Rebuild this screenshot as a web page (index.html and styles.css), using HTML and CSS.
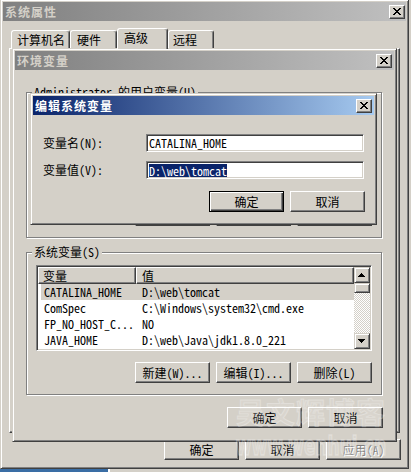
FILE: index.html
```html
<!DOCTYPE html>
<html lang="zh-CN">
<head>
<meta charset="utf-8">
<title>编辑系统变量</title>
<link rel="stylesheet" href="styles.css">
</head>
<body>
<div class="desktop">
  <div class="win win-main">
    <div class="titlebar inactive">
      <span class="title-text">系统属性</span>
      <span class="close-btn"><svg width="8" height="7" viewBox="0 0 8 7" shape-rendering="crispEdges"><path d="M0 0h2v1H0zM6 0h2v1H6zM1 1h2v1H1zM5 1h2v1H5zM2 2h4v1H2zM3 3h2v1H3zM2 4h4v1H2zM1 5h2v1H1zM5 5h2v1H5zM0 6h2v1H0zM6 6h2v1H6z" fill="#000"/></svg></span>
    </div>
    <div class="tabs">
      <div class="tab tab-1">计算机名</div>
      <div class="tab tab-2">硬件</div>
      <div class="tab tab-3 selected">高级</div>
      <div class="tab tab-4">远程</div>
    </div>
    <div class="tabpage"></div>
    <div class="btn-row main-btns">
      <button class="btn">确定</button>
      <button class="btn">取消</button>
      <button class="btn disabled">应用(A)</button>
    </div>
  </div>

  <div class="win win-env">
    <div class="titlebar inactive">
      <span class="title-text">环境变量</span>
      <span class="close-btn"><svg width="8" height="7" viewBox="0 0 8 7" shape-rendering="crispEdges"><path d="M0 0h2v1H0zM6 0h2v1H6zM1 1h2v1H1zM5 1h2v1H5zM2 2h4v1H2zM3 3h2v1H3zM2 4h4v1H2zM1 5h2v1H1zM5 5h2v1H5zM0 6h2v1H0zM6 6h2v1H6z" fill="#000"/></svg></span>
    </div>
    <div class="env-body">
      <div class="group group-user">
        <div class="legend">Administrator 的用户变量(U)</div>
        <div class="listbox"></div>
        <div class="btn-row group-btns">
          <button class="btn">新建(N)...</button>
          <button class="btn">编辑(E)...</button>
          <button class="btn">删除(D)</button>
        </div>
      </div>
      <div class="group group-sys">
        <div class="legend">系统变量(S)</div>
        <div class="listbox">
          <div class="list-main">
            <div class="list-header">
              <div class="hcell hc1">变量</div>
              <div class="hcell hc2">值</div>
            </div>
            <div class="row selected"><span class="c1">CATALINA_HOME</span><span class="c2">D:\web\tomcat</span></div>
            <div class="row"><span class="c1">ComSpec</span><span class="c2">C:\Windows\system32\cmd.exe</span></div>
            <div class="row"><span class="c1">FP_NO_HOST_C...</span><span class="c2">NO</span></div>
            <div class="row"><span class="c1">JAVA_HOME</span><span class="c2">D:\web\Java\jdk1.8.0_221</span></div>
          </div>
          <div class="vscroll">
            <div class="sb-btn"><svg width="7" height="4" viewBox="0 0 7 4" shape-rendering="crispEdges"><path d="M3 0h1v1h1v1h1v1h1v1H0V3h1V2h1V1h1z" fill="#000"/></svg></div>
            <div class="sb-thumb"></div>
            <div class="sb-track"></div>
            <div class="sb-btn"><svg width="7" height="4" viewBox="0 0 7 4" shape-rendering="crispEdges"><path d="M0 0h7v1H6v1H5v1H4v1H3V3H2V2H1V1H0z" fill="#000"/></svg></div>
          </div>
        </div>
        <div class="btn-row group-btns sys-btns">
          <button class="btn">新建(W)...</button>
          <button class="btn">编辑(I)...</button>
          <button class="btn">删除(L)</button>
        </div>
      </div>
      <div class="btn-row env-btns">
        <button class="btn">确定</button>
        <button class="btn">取消</button>
      </div>
    </div>
  </div>

  <div class="win win-edit">
    <div class="titlebar active">
      <span class="title-text">编辑系统变量</span>
      <span class="close-btn"><svg width="8" height="7" viewBox="0 0 8 7" shape-rendering="crispEdges"><path d="M0 0h2v1H0zM6 0h2v1H6zM1 1h2v1H1zM5 1h2v1H5zM2 2h4v1H2zM3 3h2v1H3zM2 4h4v1H2zM1 5h2v1H1zM5 5h2v1H5zM0 6h2v1H0zM6 6h2v1H6z" fill="#000"/></svg></span>
    </div>
    <div class="edit-body">
      <div class="field">
        <span class="field-label">变量名(N):</span>
        <div class="textbox">CATALINA_HOME</div>
      </div>
      <div class="field field-2">
        <span class="field-label">变量值(V):</span>
        <div class="textbox"><span class="sel">D:\web\tomcat</span></div>
      </div>
      <div class="btn-row edit-btns">
        <button class="btn default">确定</button>
        <button class="btn">取消</button>
      </div>
    </div>
  </div>

  <div class="watermark">
    <div class="wm-cn">吴文辉博客</div>
    <div class="wm-en">www.wenhui.cn</div>
  </div>
</div>
<div class="taskstrip"><span class="ts-blue"></span><span class="ts-white"></span></div>
</body>
</html>
```
FILE: styles.css
```css
* { box-sizing: border-box; }
html, body { margin: 0; padding: 0; }
body {
  width: 411px;
  height: 472px;
  overflow: hidden;
  background: #d4d0c8;
  color: #000;
  font-family: "Noto Sans Mono CJK SC", "Noto Sans CJK SC", monospace;
  font-size: 12px;
  line-height: 12px;
}
.desktop { position: relative; height: 469px; overflow: hidden; }

.win {
  position: absolute;
  display: flex;
  flex-direction: column;
  background: #d4d0c8;
  border: 1px solid;
  border-color: #d4d0c8 #404040 #404040 #d4d0c8;
  box-shadow: inset 1px 1px #fff, inset -1px -1px #808080;
  padding: 2px;
}
.win-main { left: 0; top: -1px; width: 409px; height: 470px; }
.win-env { left: 12px; top: 48px; width: 385px; height: 394px; }
.win-edit { left: 30px; top: 93px; width: 347px; height: 132px; }

.titlebar {
  flex: none;
  height: 19px;
  display: flex;
  align-items: center;
  justify-content: space-between;
  padding-left: 2px;
  font-weight: 700;
  letter-spacing: 1px;
}
.titlebar.inactive { background: linear-gradient(to right, #808080, #c0c0c0); color: #d4d0c8; }
.titlebar.active { background: linear-gradient(to right, #0a246a, #a6caf0); color: #fff; }
.close-btn {
  width: 16px;
  height: 14px;
  margin-right: 2px;
  background: #d4d0c8;
  border: 1px solid;
  border-color: #fff #404040 #404040 #fff;
  box-shadow: inset -1px -1px #808080;
  padding: 2px 0 0 3px;
  line-height: 0;
}
.win-main .close-btn { margin-right: 1px; }
.close-btn svg { display: block; }

/* tabs */
.tabs {
  position: relative;
  z-index: 1;
  display: flex;
  align-items: flex-end;
  height: 20px;
  margin: 7px 0 0 8px;
}
.tab {
  height: 18px;
  background: #d4d0c8;
  border: 1px solid;
  border-bottom: 0;
  border-color: #fff #404040 transparent #fff;
  border-radius: 3px 3px 0 0;
  box-shadow: inset -1px 0 #808080;
  padding: 3px 0 0 5px;
  line-height: 12px;
}
.tab-1 { width: 59px; }
.tab-2 { width: 47px; padding-left: 6px; }
.tab-3 { width: 51px; padding-left: 6px; }
.tab-4 { width: 46px; padding-left: 4px; }
.tab.selected { height: 21px; margin-bottom: -1px; padding-top: 3px; }
.tabpage {
  margin-left: 6px;
  width: 391px;
  height: 385px;
  border: 1px solid;
  border-color: #fff #404040 #404040 #fff;
  box-shadow: inset -1px -1px #808080;
}

/* buttons */
.btn-row { display: flex; justify-content: flex-end; gap: 6px; }
.btn {
  width: 75px;
  height: 21px;
  flex: none;
  margin: 0;
  padding: 0;
  font: inherit;
  color: #000;
  background: #d4d0c8;
  border: 1px solid;
  border-color: #fff #404040 #404040 #fff;
  box-shadow: inset -1px -1px #808080;
  display: flex;
  align-items: center;
  justify-content: center;
}
.btn.default {
  border-color: #000;
  box-shadow: inset 1px 1px #fff, inset -1px -1px #404040, inset -2px -2px #808080;
}
.btn.disabled { color: #808080; text-shadow: 1px 1px #fff; }
.main-btns { margin-top: 6px; padding-right: 5px; }

/* env window */
.env-body { display: flex; flex-direction: column; }
.group {
  margin: 0 12px 0 11px;
  border: 1px solid #808080;
  box-shadow: inset 1px 1px #fff, 1px 1px #fff;
  padding: 0 9px 11px 9px;
}
.group-user { margin-top: 22px; }
.group-sys { margin-top: 14px; }
.legend {
  width: max-content;
  margin: -7px 0 0 -4px;
  padding: 0 2px;
  height: 12px;
  line-height: 12px;
  background: #d4d0c8;
}
.group-user .group-btns { margin-top: 14px; }
.sys-btns { margin-top: 11px; }
.env-btns { margin-top: 12px; padding-right: 11px; }

.listbox {
  display: flex;
  height: 86px;
  margin-top: 7px;
  border: 1px solid;
  border-color: #808080 #fff #fff #808080;
  box-shadow: inset 1px 1px #404040, inset -1px -1px #d4d0c8;
  padding: 1px;
  background: #fff;
}
.list-main { flex: 1; display: flex; flex-direction: column; background: #fff; }
.list-header { display: flex; height: 17px; flex: none; }
.hcell {
  height: 17px;
  background: #d4d0c8;
  border: 1px solid;
  border-color: #fff #404040 #404040 #fff;
  box-shadow: inset -1px -1px #808080;
  display: flex;
  align-items: center;
  padding-left: 4px;
}
.hc1 { width: 98px; }
.hc2 { flex: 1; padding-left: 5px; }
.row {
  display: flex;
  height: 16px;
  line-height: 16px;
  margin-left: 3px;
  padding-left: 3px;
  white-space: pre;
}
.row.selected { background: #d4d0c8; }
.c1 { width: 98px; flex: none; }

.vscroll { width: 16px; flex: none; display: flex; flex-direction: column; }
.sb-btn, .sb-thumb {
  flex: none;
  background: #d4d0c8;
  border: 1px solid;
  border-color: #d4d0c8 #404040 #404040 #d4d0c8;
  box-shadow: inset 1px 1px #fff, inset -1px -1px #808080;
}
.sb-btn { height: 16px; padding: 5px 0 0 3px; line-height: 0; }
.sb-btn svg { display: block; }
.sb-thumb { height: 10px; }
.sb-track {
  flex: 1;
  background: repeating-conic-gradient(#d4d0c8 0 25%, #fff 0 50%) 0 0 / 2px 2px;
}

/* edit dialog */
.edit-body { padding: 19px 9px 0 10px; display: flex; flex-direction: column; }
.field { display: flex; align-items: center; height: 18px; }
.field-2 { margin-top: 9px; }
.field-label { width: 103px; flex: none; }
.textbox {
  width: 218px;
  height: 18px;
  background: #fff;
  border: 1px solid;
  border-color: #808080 #fff #fff #808080;
  box-shadow: inset 1px 1px #404040, inset -1px -1px #d4d0c8;
  padding: 0 0 0 2px;
  display: flex;
  align-items: center;
  white-space: pre;
}
.sel { background: #0a246a; color: #fff; line-height: 13px; height: 13px; }
.edit-btns { margin-top: 12px; }

/* watermark */
.watermark {
  position: absolute;
  left: 228px;
  top: 392px;
  width: 166px;
  text-align: center;
  color: rgba(255, 255, 255, 0.12);
  -webkit-text-stroke: 1px rgba(255, 255, 255, 0.28);
  font-family: "Noto Sans CJK SC", sans-serif;
  font-weight: 700;
  white-space: nowrap;
  pointer-events: none;
}
.wm-cn { font-size: 29px; line-height: 38px; letter-spacing: 1px; }
.wm-en {
  font-size: 17px;
  line-height: 30px;
  font-family: "DejaVu Sans", sans-serif;
  transform: scaleY(1.6);
}

.taskstrip { display: flex; height: 3px; }
.ts-blue { width: 108px; background: #3a6ea5; }
.ts-white { width: 2px; background: #fff; }
```
